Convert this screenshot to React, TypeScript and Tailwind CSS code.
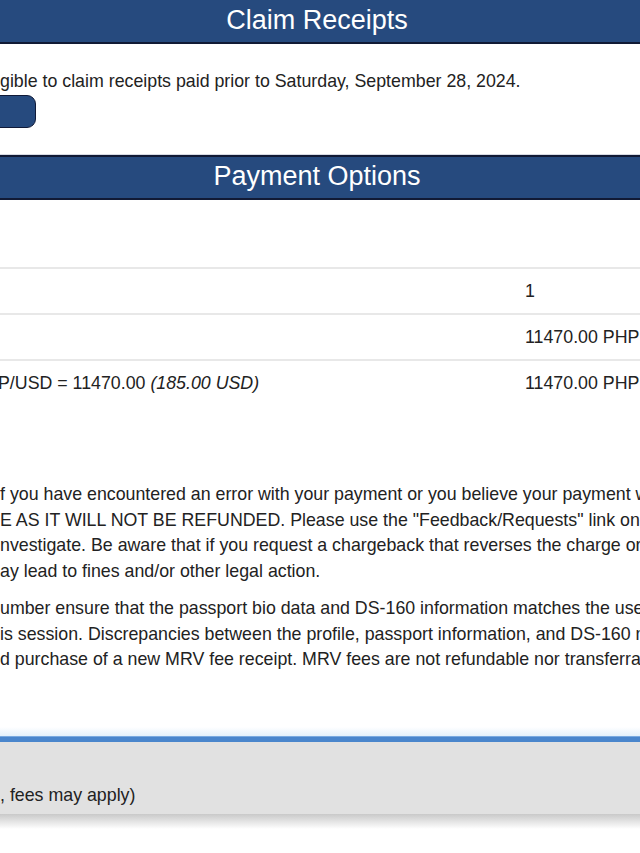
import React from 'react';

const rows = [
  { left: '', right: '1' },
  { left: '', right: '11470.00 PHP' },
  { left: 'P/USD = 11470.00 ', italic: '(185.00 USD)', right: '11470.00 PHP' },
];

const para1 = [
  'f you have encountered an error with your payment or you believe your payment was processed incorrectly',
  'E AS IT WILL NOT BE REFUNDED. Please use the "Feedback/Requests" link on the left side of the page',
  'nvestigate. Be aware that if you request a chargeback that reverses the charge or payment you made',
  'ay lead to fines and/or other legal action.',
];

const para2 = [
  'umber ensure that the passport bio data and DS-160 information matches the user profile',
  'is session. Discrepancies between the profile, passport information, and DS-160 may result in',
  'd purchase of a new MRV fee receipt. MRV fees are not refundable nor transferrable.',
];

function SectionHeader({ title, top }: { title: string; top?: boolean }) {
  return (
    <div
      className={`h-[44px] bg-[#264a7e] border-b-2 border-[#111a35] flex items-center justify-center pr-[6px] text-white text-[27px] leading-none ${
        top ? 'border-t-2 border-t-[#111a35] h-[45px]' : ''
      }`}
    >
      <span className="-mt-[2px]">{title}</span>
    </div>
  );
}

export default function App() {
  return (
    <div className="w-[640px] h-[853px] overflow-hidden bg-white text-[#222] font-['Liberation_Sans',Arial,sans-serif]">
      <SectionHeader title="Claim Receipts" />

      <div className="pt-[24px] pb-[26px]">
        <div className="h-[26px] leading-[26px] text-[17.8px] whitespace-nowrap">
          gible to claim receipts paid prior to Saturday, September 28, 2024.
        </div>
        <div className="mt-[1px] w-[120px] -ml-[84px] h-[33px] rounded-[9px] bg-[#264a7e] border border-[#101a38]" />
      </div>

      <div className="border-t border-[#d8dbe3]">
        <SectionHeader title="Payment Options" top />
      </div>

      <div className="h-[67px]" />
      {rows.map((r, i) => (
        <div key={i} className="h-[46px] border-t-2 border-[#e8e8e8] flex items-center text-[17.8px] whitespace-nowrap">
          <div className="w-[527px] -ml-[2px] overflow-hidden">
            {r.left}
            {r.italic && <i>{r.italic}</i>}
          </div>
          <div className="flex-1">{r.right}</div>
        </div>
      ))}

      <div className="mt-[77px] text-[17.8px] leading-[25.7px] whitespace-nowrap">
        {para1.map((l, i) => (
          <div key={i}>{l}</div>
        ))}
      </div>
      <div className="mt-[11px] text-[17.8px] leading-[25.7px] whitespace-nowrap">
        {para2.map((l, i) => (
          <div key={i}>{l}</div>
        ))}
      </div>

      <div className="mt-[54px] h-[9px] bg-gradient-to-b from-white to-[#e4f1fb]" />
      <div className="h-[6px] bg-[#4a86cc] border-t border-[#7aaae0]" />
      <div className="h-[72px] bg-[#e1e1e1] pt-[40px] text-[17.8px] leading-[26px] whitespace-nowrap">
        , fees may apply)
      </div>
      <div className="h-[15px] bg-gradient-to-b from-[#c9c9c9] to-white" />
    </div>
  );
}
